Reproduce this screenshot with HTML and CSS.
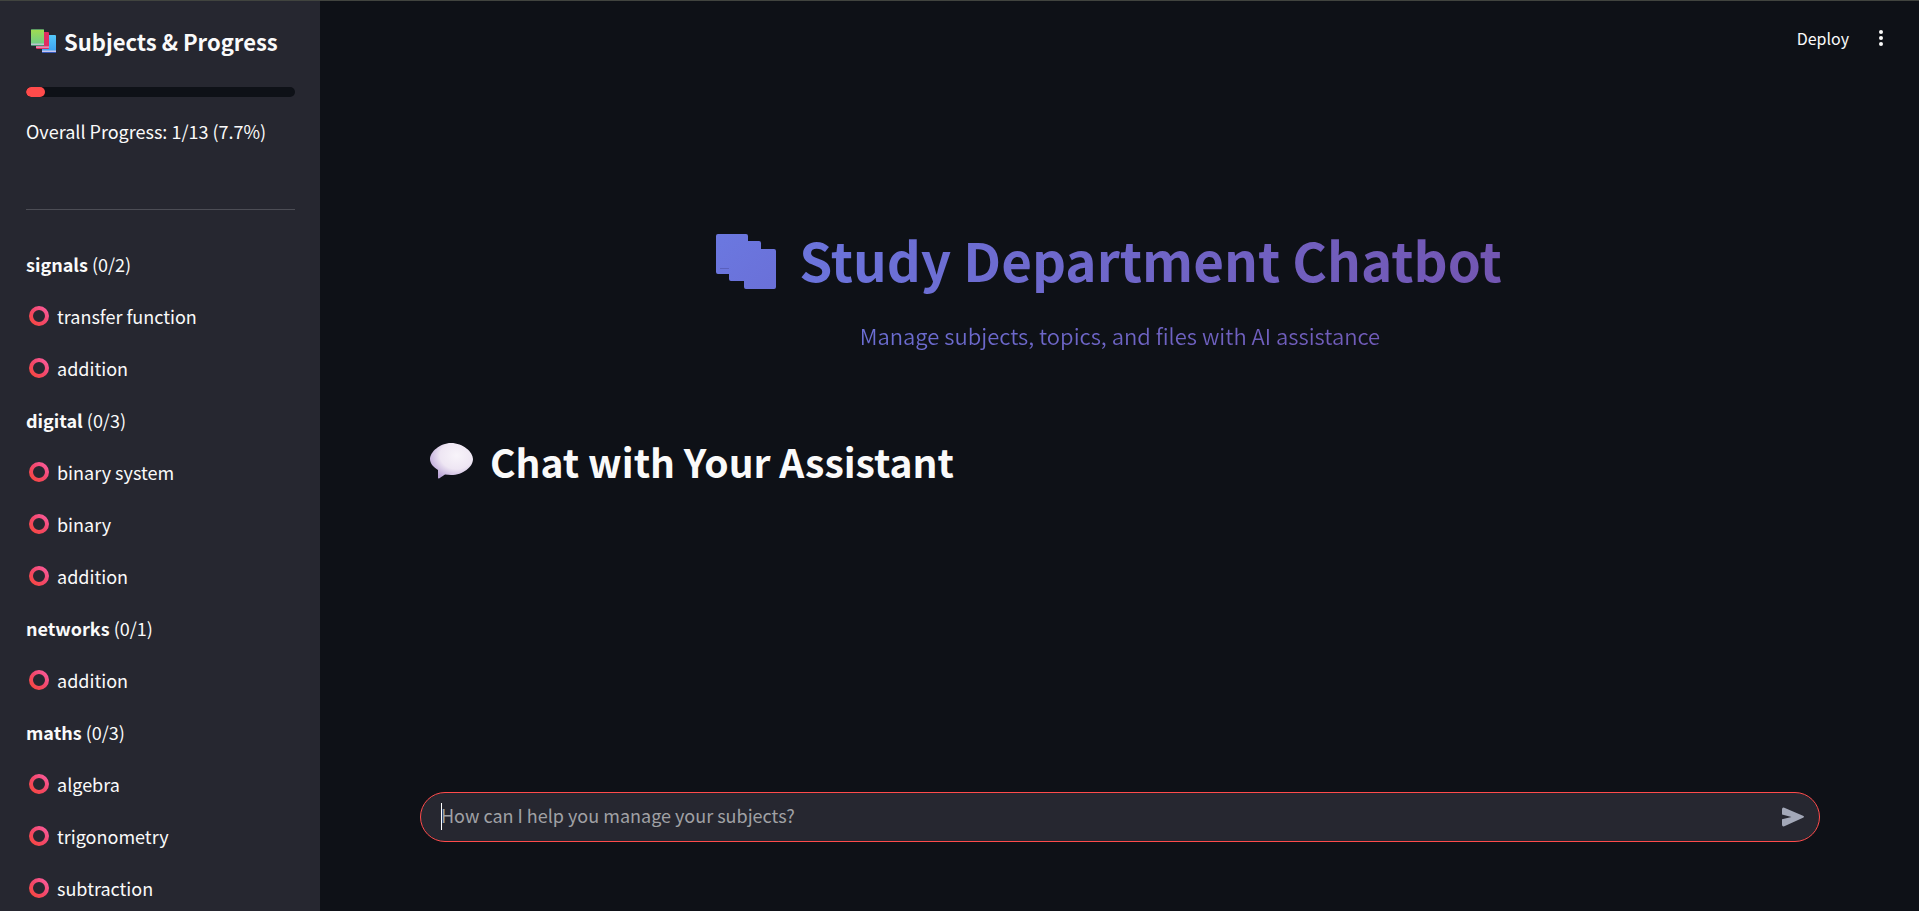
FILE: index.html
```html
<!DOCTYPE html>
<html lang="en">
<head>
<meta charset="utf-8">
<title>Study Department Chatbot</title>
<link rel="stylesheet" href="styles.css">
</head>
<body>
<svg class="defs" aria-hidden="true">
  <defs>
    <linearGradient id="ring" x1="0" y1="1" x2="1" y2="0"><stop offset="0" stop-color="#f8483f"/><stop offset=".5" stop-color="#f2476a"/><stop offset="1" stop-color="#fb5c9c"/></linearGradient>
    <linearGradient id="green" x1="0" y1="0" x2="0" y2="1"><stop offset="0" stop-color="#a3dc4e"/><stop offset="1" stop-color="#68cb8f"/></linearGradient>
    <linearGradient id="blue" x1="0" y1="0" x2="0" y2="1"><stop offset="0" stop-color="#55c8fa"/><stop offset="1" stop-color="#3a9df0"/></linearGradient>
    <linearGradient id="books" x1="0" y1="0" x2="1" y2="1"><stop offset="0" stop-color="#6b78e0"/><stop offset="1" stop-color="#6a70d8"/></linearGradient>
    <radialGradient id="bubble" cx=".62" cy=".35" r=".7"><stop offset="0" stop-color="#f8f4fa"/><stop offset=".55" stop-color="#eee6f3"/><stop offset="1" stop-color="#b9a3d6"/></radialGradient>
    <symbol id="circle" viewBox="0 0 20 20"><circle cx="10" cy="10" r="8" fill="none" stroke="url(#ring)" stroke-width="4"/></symbol>
  </defs>
</svg>
<div class="app">
  <aside class="sidebar">
    <h2 class="sidebar-title">
      <svg class="books-small" viewBox="0 0 25 24" aria-hidden="true">
        <rect x="11" y="6" width="14" height="18" rx="1" fill="url(#blue)"/><path d="M11 21.500h14v1.500H11z" fill="#c9c4ee"/><path d="M11 23h14v1H11z" fill="#3558b8"/>
        <rect x="5" y="3" width="13" height="17" rx="1" fill="#e12d62"/><path d="M5 17.500h13v1.200H5z" fill="#e5b7d3"/>
        <rect x="0" y="0" width="13" height="17" rx="1" fill="url(#green)"/><path d="M0 14.500h13V16H0z" fill="#b9c5cf"/><path d="M0 16h13v1H0zM0 0h13v1H0z" fill="#3f7d68" opacity=".7"/>
      </svg>
      Subjects &amp; Progress
    </h2>
    <div class="progress" role="progressbar" aria-valuenow="7" aria-valuemin="0" aria-valuemax="100" aria-label="Overall progress"><div class="progress-fill" style="width:7%"></div></div>
    <p class="progress-text">Overall Progress: 1/13 (7.7%)</p>
    <hr class="divider">
    <div class="subjects">
      <p><strong>signals</strong> (0/2)</p>
      <p class="topic"><svg class="ring"><use href="#circle"/></svg>transfer function</p>
      <p class="topic"><svg class="ring"><use href="#circle"/></svg>addition</p>
      <p><strong>digital</strong> (0/3)</p>
      <p class="topic"><svg class="ring"><use href="#circle"/></svg>binary system</p>
      <p class="topic"><svg class="ring"><use href="#circle"/></svg>binary</p>
      <p class="topic"><svg class="ring"><use href="#circle"/></svg>addition</p>
      <p><strong>networks</strong> (0/1)</p>
      <p class="topic"><svg class="ring"><use href="#circle"/></svg>addition</p>
      <p><strong>maths</strong> (0/3)</p>
      <p class="topic"><svg class="ring"><use href="#circle"/></svg>algebra</p>
      <p class="topic"><svg class="ring"><use href="#circle"/></svg>trigonometry</p>
      <p class="topic"><svg class="ring"><use href="#circle"/></svg>subtraction</p>
    </div>
  </aside>
  <main class="main">
    <header class="toolbar">
      <button class="deploy" type="button">Deploy</button>
      <button class="menu" type="button" aria-label="Main menu"><svg viewBox="0 0 6 18" aria-hidden="true"><circle cx="3" cy="3" r="2"/><circle cx="3" cy="9" r="2"/><circle cx="3" cy="15" r="2"/></svg></button>
    </header>
    <section class="hero">
      <h1 class="hero-title"><svg class="books-large" viewBox="0 0 60 55" aria-hidden="true"><path fill="url(#books)" d="M2 0h28q2 0 2 2v5h11q2 0 2 2v6h13q2 0 2 2v36q0 2-2 2H30q-2 0-2-2v-6H15q-2 0-2-2v-5H2q-2 0-2-2V2Q0 0 2 0z"/><path stroke="#5a60bd" d="M4 34.500h9"/></svg><span>Study Department Chatbot</span></h1>
      <p class="hero-subtitle">Manage subjects, topics, and files with AI assistance</p>
    </section>
    <h2 class="chat-title"><svg class="bubble" viewBox="0 0 43 36" aria-hidden="true"><path fill="url(#bubble)" d="M21 0C33 0 43 9 43 16C43 24 33 32 21 32c-2 0-4 0-6-.4-2 1-4 2.800-6 3.900-.7.300-1-.2-1-.7V27C3 24 0 20 0 16C0 9 10 0 21 0z"/></svg>Chat with Your Assistant</h2>
    <form class="chat-input">
      <input type="text" aria-label="Chat message" placeholder="How can I help you manage your subjects?">
      <span class="caret"></span>
      <button type="button" class="send" aria-label="Send message"><svg viewBox="0 0 24 20" aria-hidden="true"><path d="M1 2.500Q1 0 3.300.7L22 8.800q2 1 0 2L3.300 19.300Q1 20 1 17.500v-5.200L10.500 10 1 7.600z"/></svg></button>
    </form>
  </main>
</div>
</body>
</html>
```
FILE: styles.css
```css
* { box-sizing: border-box; }

body {
  margin: 0;
  background: #0e1117;
  color: #fafafa;
  font-family: "Noto Sans CJK SC", "Noto Sans", sans-serif;
  font-size: 18px;
  line-height: 32px;
}

h1, h2, p { margin: 0; }
svg { flex: none; }
button { font: inherit; color: inherit; background: none; border: 0; padding: 0; }

.defs { position: absolute; width: 0; height: 0; }

.app {
  display: flex;
  height: 100vh;
  border-top: 1px solid #41443f;
  overflow: hidden;
}

.sidebar {
  flex: none;
  width: 320px;
  padding: 24px 25px 0 26px;
  background: #262730;
  overflow: hidden;
}

.sidebar-title {
  display: flex;
  align-items: center;
  gap: 8px;
  padding-left: 5px;
  font-size: 22px;
  font-weight: 700;
  white-space: nowrap;
}
.books-small { width: 25px; height: 24px; }

.progress {
  height: 10px;
  margin-top: 30px;
  border-radius: 5px;
  background: #0e1117;
  overflow: hidden;
}
.progress-fill { height: 100%; border-radius: 5px; background: #ff4b4b; }

.progress-text { margin-top: 18px; }

.divider {
  height: 1px;
  margin: 62px 0 38px;
  border: 0;
  background: #4c4d55;
}

.subjects { display: flex; flex-direction: column; gap: 20px; }
.topic { display: flex; align-items: center; gap: 8px; padding-left: 3px; }
.ring { width: 20px; height: 20px; }

.main {
  flex: 1;
  display: flex;
  flex-direction: column;
  min-width: 0;
  padding: 0 99px 69px 100px;
}

.toolbar {
  display: flex;
  justify-content: flex-end;
  align-items: center;
  gap: 29px;
  height: 74px;
  margin-right: -64px;
  font-size: 16px;
}
.menu svg { display: block; width: 6px; height: 18px; fill: #fafafa; }

.hero {
  display: flex;
  flex-direction: column;
  margin-top: 144px;
  text-align: center;
}
.hero-title {
  display: flex;
  justify-content: center;
  align-items: center;
  gap: 23px;
  padding-right: 22px;
  font-size: 53px;
  font-weight: 700;
  line-height: 80px;
}
.hero-title span, .hero-subtitle {
  color: transparent;
  background: linear-gradient(135deg, #667eea, #764ba2);
  background-clip: text;
}
.hero-title span { background-image: linear-gradient(90deg, #6b74dc, #7356b2); }
.books-large { width: 60px; height: 55px; margin-top: 5px; }
.hero-subtitle {
  margin-top: 20px;
  font-size: 22px;
  font-weight: 350;
  line-height: 32px;
}

.chat-title {
  display: flex;
  align-items: center;
  gap: 17px;
  margin-top: 80px;
  padding-left: 10px;
  font-size: 39px;
  font-weight: 700;
  line-height: 60px;
}
.bubble { width: 43px; height: 36px; }

.chat-input {
  position: relative;
  display: flex;
  align-items: center;
  height: 50px;
  margin-top: auto;
  padding: 0 14px 0 20px;
  border: 1px solid #ff4b4b;
  border-radius: 25px;
  background: #262730;
}
.chat-input input {
  flex: 1;
  min-width: 0;
  padding: 0 0 5px;
  border: 0;
  outline: 0;
  background: none;
  color: #fafafa;
  font: inherit;
}
.chat-input input::placeholder { color: #a0a1a5; opacity: 1; }
.caret { position: absolute; left: 20px; top: 10px; width: 1px; height: 27px; background: #fff; }
.send svg { display: block; width: 24px; height: 20px; fill: #a3a8b8; }
```
